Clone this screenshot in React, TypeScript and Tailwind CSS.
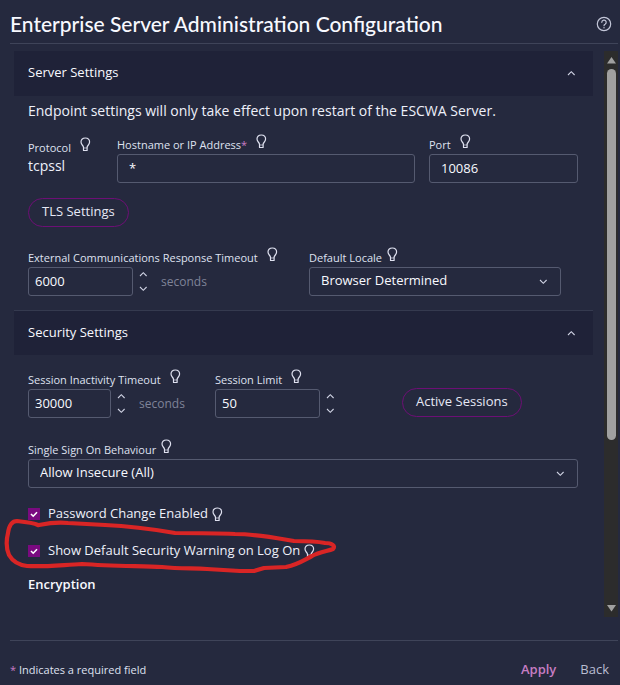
import { useState, type ReactNode } from "react";

function Bulb() {
  return (
    <svg width="11" height="15" viewBox="0 0 11 15" fill="none" stroke="#dfe1f0" strokeWidth="1.2" strokeLinejoin="round" className="shrink-0">
      <path d="M3.5 10.3C3.5 8.4 1 7.9 1 5.1C1 2.6 2.9 1 5.3 1S9.6 2.6 9.6 5.1C9.6 7.9 7.1 8.4 7.1 10.3" />
      <path d="M3.5 10v3.5h3.6V10" />
      <path d="M3.5 11h3.6" strokeWidth="0.7" />
    </svg>
  );
}

function Chevron({ up = false }: { up?: boolean }) {
  return (
    <svg width="9" height="6" viewBox="0 0 9 6" fill="none" stroke="#d0d3e4" strokeWidth="1.1" className="shrink-0">
      <path d={up ? "M1 5l3.3-3.3L7.6 5" : "M1 1l3.3 3.3L7.6 1"} />
    </svg>
  );
}

function FieldLabel({ id, text, required = false, tight = false }: {
  id: string; text: string; required?: boolean; tight?: boolean;
}) {
  return (
    <div className={`flex h-5 items-start ${tight ? "gap-[5px]" : "gap-[9px]"}`}>
      <label htmlFor={id} className="pt-[3px] text-[11px] leading-4 font-medium whitespace-nowrap text-[#dfe1f0]">
        {text}
        {required && <span className="text-[#c77dc4]">*</span>}
      </label>
      <Bulb />
    </div>
  );
}

const fieldClass = "block h-[29px] rounded-[3px] border border-[#555a70] bg-transparent pb-[2px] text-[13px] font-medium text-[#f8f9ff] outline-none";

function TextField({ id, label, value, required }: {
  id: string; label: string; value: string; required?: boolean;
}) {
  return (
    <div>
      <FieldLabel id={id} text={label} required={required} />
      <input id={id} type="text" defaultValue={value} className={`${fieldClass} w-full px-[11px]`} />
    </div>
  );
}

function NumberField({ id, label, initial, width, unit }: {
  id: string; label: string; initial: number; width: string; unit?: string;
}) {
  const [value, setValue] = useState(initial);

  return (
    <div>
      <FieldLabel id={id} text={label} />
      <div className="flex items-center">
        <input
          id={id}
          type="text"
          inputMode="numeric"
          value={value}
          onChange={(e) => setValue(Number(e.target.value) || 0)}
          className={`${fieldClass} ${width} px-[6px]`}
        />
        <div className="ml-[6px] flex h-[25px] flex-col justify-between">
          <button type="button" aria-label="Increase" onClick={() => setValue(value + 1)} className="h-[10px] flex items-center">
            <Chevron up />
          </button>
          <button type="button" aria-label="Decrease" onClick={() => setValue(value - 1)} className="h-[10px] flex items-center">
            <Chevron />
          </button>
        </div>
        {unit && <span className="ml-[13px] text-[12px] text-[#7f8398]">{unit}</span>}
      </div>
    </div>
  );
}

function SelectField({ id, label, options }: { id: string; label: string; options: string[] }) {
  return (
    <div>
      <FieldLabel id={id} text={label} tight />
      <div className="relative">
        <select id={id} className={`${fieldClass} w-full appearance-none px-[11px]`}>
          {options.map(o => <option key={o}>{o}</option>)}
        </select>
        <span className="pointer-events-none absolute inset-y-0 right-[13px] flex items-center">
          <Chevron />
        </span>
      </div>
    </div>
  );
}

function CheckField({ id, label }: { id: string; label: string }) {
  const [checked, setChecked] = useState(true);

  return (
    <div className="flex h-5 items-center">
      <span className="relative h-3 w-3">
        <input
          id={id}
          type="checkbox"
          checked={checked}
          onChange={(e) => setChecked(e.target.checked)}
          className="block h-3 w-3 appearance-none bg-[#7a0a80]"
        />
        {checked && (
          <svg width="12" height="12" viewBox="0 0 12 12" fill="none" stroke="#fff" strokeWidth="1.6" className="pointer-events-none absolute inset-0">
            <path d="M3 6l2.2 2.2L9 4.2" />
          </svg>
        )}
      </span>
      <label htmlFor={id} className="mr-1 ml-2 text-[13px] text-[#eef0fa]">{label}</label>
      <Bulb />
    </div>
  );
}

function PillButton({ children }: { children: ReactNode }) {
  return (
    <button type="button" className="h-[29px] rounded-full border border-[#6d0f75] px-[13px] pb-px text-[13px] whitespace-nowrap text-[#e6e8f5]">
      {children}
    </button>
  );
}

function Section({ title, divider = false, children }: {
  title: string; divider?: boolean; children: ReactNode;
}) {
  const [open, setOpen] = useState(true);

  return (
    <section>
      <button
        type="button"
        onClick={() => setOpen(!open)}
        className={`flex h-[45px] w-full items-center justify-between bg-[#1f2238] pr-[17px] pb-px pl-[14px] text-[13px] font-medium text-[#f8f9ff] ${divider ? "border-t border-[#353a4f]" : ""}`}
      >
        {title}
        <Chevron up={open} />
      </button>
      {open && <div className="pr-[15px] pl-[14px]">{children}</div>}
    </section>
  );
}

function Scrollbar() {
  return (
    <div className="flex w-[14px] shrink-0 flex-col items-center bg-[#2c2c2c]" aria-hidden="true">
      <div className="flex h-[18px] items-center">
        <svg width="9" height="7" viewBox="0 0 9 7" fill="#a0a0a0"><path d="M4.5 0L9 6.5H0z" /></svg>
      </div>
      <div className="w-full flex-1">
        <div className="mx-auto h-[70%] w-[9px] rounded-full bg-[#a0a0a0]" />
      </div>
      <div className="flex h-[18px] items-center">
        <svg width="9" height="7" viewBox="0 0 9 7" fill="#a0a0a0"><path d="M4.5 6.5L0 0h9z" /></svg>
      </div>
    </div>
  );
}

// hand-drawn ring around the log on warning option
function RedMark() {
  return (
    <svg width="345" height="65" viewBox="0 515 345 65" fill="none" stroke="#d92525" strokeWidth="4.2" strokeLinecap="round" strokeLinejoin="round" className="pointer-events-none absolute -top-[26px] -left-7 max-w-none">
      <path d="M38 525C34 523 26 522 17 521C11 521 9 526 8 533C6 541 6 548 9 555C13 562 19 565 27 566C43 567 61 565 82 564C110 566 140 566 162 567C180 569 193 568 207 569L240 571L254 571L264 568L286 567C299 564 304 560 312 556C319 552 328 551 333 549C336 546 332 543 325 543C315 541 305 541 294 541C276 538 256 534 235 534C214 533 194 533 175 533C152 529 129 526 105 525L68 523C59 522 49 523 39 525" />
    </svg>
  );
}

export default function App() {
  return (
    <div className="flex h-screen min-h-[685px] flex-col bg-[#25293e] font-['Open_Sans',sans-serif]">
      <header className="mr-[2px] ml-[10px] flex h-11 items-center justify-between border-b border-[#3f4459] pt-1 pr-[6px]">
        <h1 className="font-['Lato',sans-serif] text-[21px] font-medium text-[#f8f9ff]">
          Enterprise Server Administration Configuration
        </h1>
        <button type="button" aria-label="Help">
          <svg width="16" height="16" viewBox="0 0 16 16" fill="none" stroke="#c3c6d8" strokeWidth="1.2" strokeLinecap="round">
            <circle cx="8" cy="8" r="6.7" />
            <path d="M5.8 6.3a2.2 2.2 0 1 1 3.3 1.9c-.8.4-1.1.8-1.1 1.5" />
            <path d="M8 11.7v.1" strokeWidth="1.4" />
          </svg>
        </button>
      </header>

      <div className="mt-[7px] mr-[2px] flex min-h-0 flex-1 overflow-hidden">
        <main className="mr-[11px] ml-[14px] flex-1">
          <Section title="Server Settings">
            <p className="pt-[5px] text-[14px] leading-5 font-medium text-[#eef0fa]">
              Endpoint settings will only take effect upon restart of the ESCWA Server.
            </p>
            <div className="mt-[13px] grid grid-cols-[75px_2fr_1fr] gap-[14px]">
              <div className="pt-[3px]">
                <FieldLabel id="protocol" text="Protocol" />
                <output id="protocol" className="block text-[14px] leading-[18px] text-[#eef0fa]">tcpssl</output>
              </div>
              <TextField id="hostname" label="Hostname or IP Address" value="*" required />
              <TextField id="port" label="Port" value="10086" />
            </div>
            <div className="mt-[15px] flex">
              <PillButton>TLS Settings</PillButton>
            </div>
            <div className="mt-5 grid grid-cols-[267px_252px] gap-[14px] pb-[14px]">
              <NumberField id="timeout" label="External Communications Response Timeout" initial={6000} width="w-[105px]" unit="seconds" />
              <SelectField id="locale" label="Default Locale" options={["Browser Determined"]} />
            </div>
          </Section>

          <Section title="Security Settings" divider>
            <div className="grid grid-cols-[173px_173px_1fr] gap-[14px] pt-[14px]">
              <NumberField id="inactivity" label="Session Inactivity Timeout" initial={30000} width="w-[83px]" unit="seconds" />
              <NumberField id="limit" label="Session Limit" initial={50} width="w-[105px]" />
              <div className="flex items-end pb-px">
                <PillButton>Active Sessions</PillButton>
              </div>
            </div>
            <div className="mt-[21px]">
              <SelectField id="sso" label="Single Sign On Behaviour" options={["Allow Insecure (All)"]} />
            </div>
            <div className="mt-4 flex flex-col gap-[17px]">
              <CheckField id="password-change" label="Password Change Enabled" />
              <div className="relative">
                <CheckField id="logon-warning" label="Show Default Security Warning on Log On" />
                <RedMark />
              </div>
            </div>
            <h2 className="mt-[13px] text-[13px] leading-5 font-semibold text-[#f8f9ff]">Encryption</h2>
          </Section>
        </main>
        <Scrollbar />
      </div>

      <footer className="mt-[23px] mr-[2px] ml-[10px] flex h-[45px] items-center justify-between border-t border-[#3f4459] pt-[14px] pr-[9px]">
        <p className="text-[11px] font-medium text-[#dfe1f0]">
          <span className="text-[#c77dc4]">*</span> Indicates a required field
        </p>
        <div className="flex gap-6 text-[13px]">
          <button type="button" className="font-semibold text-[#c77dc4]">Apply</button>
          <button type="button" className="text-[#b9bdd2]">Back</button>
        </div>
      </footer>
    </div>
  );
}
